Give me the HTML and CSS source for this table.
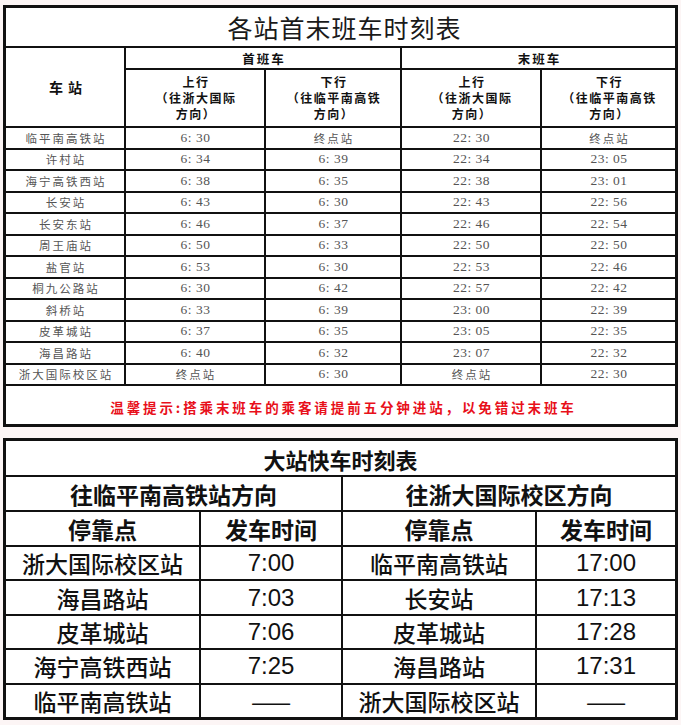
FILE: index.html
```html
<!DOCTYPE html>
<html lang="zh-CN">
<head>
<meta charset="utf-8">
<title>时刻表</title>
<link rel="stylesheet" href="styles.css">
</head>
<body>
<div class="page">
  <div class="t1">
    <div class="c title">各站首末班车时刻表</div>
    <div class="c station-h">车站</div>
    <div class="c group-h g1">首班车</div>
    <div class="c group-h g2">末班车</div>
    <div class="c sub-h">上行<br>（往浙大国际<br>方向）</div>
    <div class="c sub-h">下行<br>（往临平南高铁<br>方向）</div>
    <div class="c sub-h">上行<br>（往浙大国际<br>方向）</div>
    <div class="c sub-h">下行<br>（往临平南高铁<br>方向）</div>

    <div class="c name">临平南高铁站</div><div class="c num">6: 30</div><div class="c name">终点站</div><div class="c num">22: 30</div><div class="c name">终点站</div>
    <div class="c name">许村站</div><div class="c num">6: 34</div><div class="c num">6: 39</div><div class="c num">22: 34</div><div class="c num">23: 05</div>
    <div class="c name">海宁高铁西站</div><div class="c num">6: 38</div><div class="c num">6: 35</div><div class="c num">22: 38</div><div class="c num">23: 01</div>
    <div class="c name">长安站</div><div class="c num">6: 43</div><div class="c num">6: 30</div><div class="c num">22: 43</div><div class="c num">22: 56</div>
    <div class="c name">长安东站</div><div class="c num">6: 46</div><div class="c num">6: 37</div><div class="c num">22: 46</div><div class="c num">22: 54</div>
    <div class="c name">周王庙站</div><div class="c num">6: 50</div><div class="c num">6: 33</div><div class="c num">22: 50</div><div class="c num">22: 50</div>
    <div class="c name">盐官站</div><div class="c num">6: 53</div><div class="c num">6: 30</div><div class="c num">22: 53</div><div class="c num">22: 46</div>
    <div class="c name">桐九公路站</div><div class="c num">6: 30</div><div class="c num">6: 42</div><div class="c num">22: 57</div><div class="c num">22: 42</div>
    <div class="c name">斜桥站</div><div class="c num">6: 33</div><div class="c num">6: 39</div><div class="c num">23: 00</div><div class="c num">22: 39</div>
    <div class="c name">皮革城站</div><div class="c num">6: 37</div><div class="c num">6: 35</div><div class="c num">23: 05</div><div class="c num">22: 35</div>
    <div class="c name">海昌路站</div><div class="c num">6: 40</div><div class="c num">6: 32</div><div class="c num">23: 07</div><div class="c num">22: 32</div>
    <div class="c name">浙大国际校区站</div><div class="c name">终点站</div><div class="c num">6: 30</div><div class="c name">终点站</div><div class="c num">22: 30</div>

    <div class="c warn">温馨提示:搭乘末班车的乘客请提前五分钟进站，以免错过末班车</div>
  </div>

  <div class="t2">
    <div class="d title2">大站快车时刻表</div>
    <div class="d dir">往临平南高铁站方向</div>
    <div class="d dir">往浙大国际校区方向</div>
    <div class="d head">停靠点</div><div class="d head">发车时间</div><div class="d head">停靠点</div><div class="d head">发车时间</div>
    <div class="d stop">浙大国际校区站</div><div class="d time">7:00</div><div class="d stop">临平南高铁站</div><div class="d time">17:00</div>
    <div class="d stop">海昌路站</div><div class="d time">7:03</div><div class="d stop">长安站</div><div class="d time">17:13</div>
    <div class="d stop">皮革城站</div><div class="d time">7:06</div><div class="d stop">皮革城站</div><div class="d time">17:28</div>
    <div class="d stop">海宁高铁西站</div><div class="d time">7:25</div><div class="d stop">海昌路站</div><div class="d time">17:31</div>
    <div class="d stop">临平南高铁站</div><div class="d time dash">——</div><div class="d stop">浙大国际校区站</div><div class="d time dash">——</div>
  </div>
</div>
</body>
</html>
```

FILE: styles.css
```css
html, body {
  margin: 0;
  padding: 0;
  background: #fcf5f5;
}
body {
  font-family: "Noto Sans CJK SC", "Noto Sans", sans-serif;
  width: 681px;
  height: 725px;
  overflow: hidden;
}
.page {
  display: flex;
  flex-direction: column;
  gap: 11px;
  padding: 5px 3px 0 3px;
}

/* ---------- top table ---------- */
.t1 {
  display: grid;
  width: 675px;
  box-sizing: border-box;
  background: #111;
  padding: 3px;
  gap: 2px;
  grid-template-columns: 118px 138px 134px 138px 133px;
  grid-template-rows: 38px 20px 56px repeat(12, 19.5px) 38px;
}
.c {
  background: #fff;
  display: flex;
  align-items: center;
  justify-content: center;
  text-align: center;
}
.title {
  grid-column: 1 / -1;
  font-size: 25px;
  color: #1a1a1a;
  letter-spacing: 1px;
  padding-left: 8px;
}
.station-h {
  grid-row: 2 / 4;
  font-weight: 700;
  font-size: 14px;
  letter-spacing: 5px;
  padding-left: 6px;
  color: #111;
}
.g1 { grid-column: 2 / 4; }
.g2 { grid-column: 4 / 6; }
.group-h {
  font-weight: 700;
  font-size: 12.5px;
  letter-spacing: 2px;
  padding-left: 2px;
  color: #111;
}
.sub-h {
  font-weight: 700;
  font-size: 12px;
  line-height: 16px;
  letter-spacing: 1.5px;
  padding-left: 2px;
  color: #111;
}
.name {
  font-size: 11.5px;
  letter-spacing: 2px;
  padding-left: 2px;
  color: #555;
}
.num {
  font-family: "Liberation Serif", "Noto Sans CJK SC", serif;
  font-size: 13.5px;
  letter-spacing: 0.5px;
  padding-left: 1px;
  color: #555;
}
.warn {
  grid-column: 1 / -1;
  color: #e8101a;
  font-weight: 700;
  font-size: 13.5px;
  letter-spacing: 2.9px;
  padding-left: 6px;
  padding-top: 4px;
}

/* ---------- bottom table ---------- */
.t2 {
  display: grid;
  width: 675px;
  box-sizing: border-box;
  background: #111;
  padding: 3px;
  gap: 2px;
  grid-template-columns: 193px 140px 192px 138px;
  grid-template-rows: 34px 33px 33px repeat(5, 32.4px);
}
.d {
  background: #fff;
  display: flex;
  align-items: center;
  justify-content: center;
  color: #111;
}
.title2 {
  grid-column: 1 / -1;
  font-size: 22px;
  font-weight: 700;
  padding-top: 1px;
}
.dir {
  grid-column: span 2;
  font-size: 23px;
  font-weight: 700;
}
.head {
  font-size: 23px;
  font-weight: 700;
}
.stop {
  font-size: 23px;
  font-weight: 500;
}
.time {
  font-family: "Liberation Sans", Arial, sans-serif;
  font-size: 24px;
}
.dash {
  font-family: "Noto Sans CJK SC", sans-serif;
  font-size: 24px;
}
```
